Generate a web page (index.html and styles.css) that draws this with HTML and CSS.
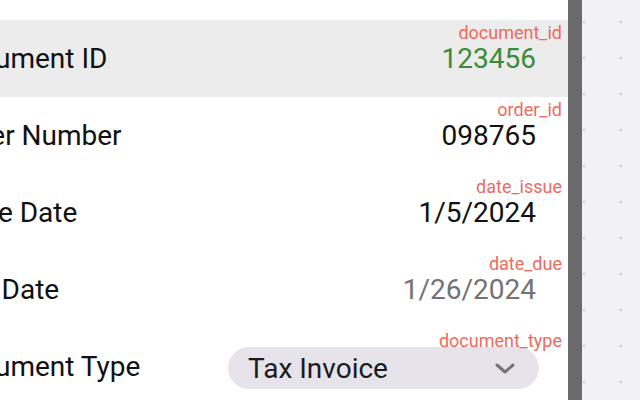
FILE: index.html
```html
<!DOCTYPE html>
<html lang="en">
<head>
<meta charset="utf-8">
<title>Document fields</title>
<link rel="stylesheet" href="styles.css">
</head>
<body>
<div class="app">
  <div class="panel">
    <div class="list">
      <div class="row row-active">
        <span class="label">Document ID</span>
        <span class="value value-green">123456</span>
        <span class="key">document_id</span>
      </div>
      <div class="row">
        <span class="label">Order Number</span>
        <span class="value">098765</span>
        <span class="key">order_id</span>
      </div>
      <div class="row">
        <span class="label">Issue Date</span>
        <span class="value">1/5/2024</span>
        <span class="key">date_issue</span>
      </div>
      <div class="row">
        <span class="label">Due Date</span>
        <span class="value value-muted">1/26/2024</span>
        <span class="key">date_due</span>
      </div>
      <div class="row">
        <span class="label">Document Type</span>
        <div class="select">
          <span class="select-text">Tax Invoice</span>
          <svg class="chevron" width="20" height="11" viewBox="0 0 20 11"><path d="M2 2 L10 9 L18 2" fill="none" stroke="#747474" stroke-width="3" stroke-linecap="round" stroke-linejoin="round"/></svg>
        </div>
        <span class="key">document_type</span>
      </div>
    </div>
  </div>
  <div class="divider"></div>
  <div class="canvas"></div>
</div>
</body>
</html>
```

FILE: styles.css
```css
* { box-sizing: border-box; }
html, body {
  margin: 0;
  padding: 0;
  background: #ffffff;
}
body {
  font-family: Roboto, "Liberation Sans", sans-serif;
}
.app {
  display: flex;
  width: 640px;
  height: 400px;
  overflow: hidden;
}
.panel {
  flex: 0 0 568px;
  background: #ffffff;
  overflow: hidden;
}
.list {
  margin-left: -54px;
  padding-top: 20px;
  display: flex;
  flex-direction: column;
}
.row {
  position: relative;
  height: 77px;
  display: flex;
  align-items: center;
  justify-content: space-between;
  padding-right: 32px;
}
.row-active {
  background: #ececec;
}
.label {
  font-size: 28px;
  color: #111111;
  white-space: nowrap;
}
.value {
  font-size: 28px;
  color: #111111;
}
.value-green { color: #3a8b3a; }
.value-muted { color: #737373; }
.key {
  position: absolute;
  top: 2px;
  right: 6px;
  font-size: 18px;
  color: #f2695d;
  line-height: 21px;
}
.select {
  width: 311px;
  height: 42px;
  margin-right: -3px;
  margin-top: 3px;
  border-radius: 21px;
  background: #e6e3ea;
  display: flex;
  align-items: center;
  justify-content: space-between;
  padding: 0 24px 0 20px;
}
.select-text {
  font-size: 28px;
  color: #1b1b1f;
}
.chevron { display: block; }
.divider {
  flex: 0 0 14px;
  background: #6b6b6b;
}
.canvas {
  flex: 1;
  background-color: #f2f2f5;
  background-image: linear-gradient(#c6c6c9, #c6c6c9);
  background-image: radial-gradient(circle at 2px 2px, #c4c4c7 1.4px, transparent 1.5px);
  background-size: 37px 36px;
  background-position: 0 20px;
}
```
